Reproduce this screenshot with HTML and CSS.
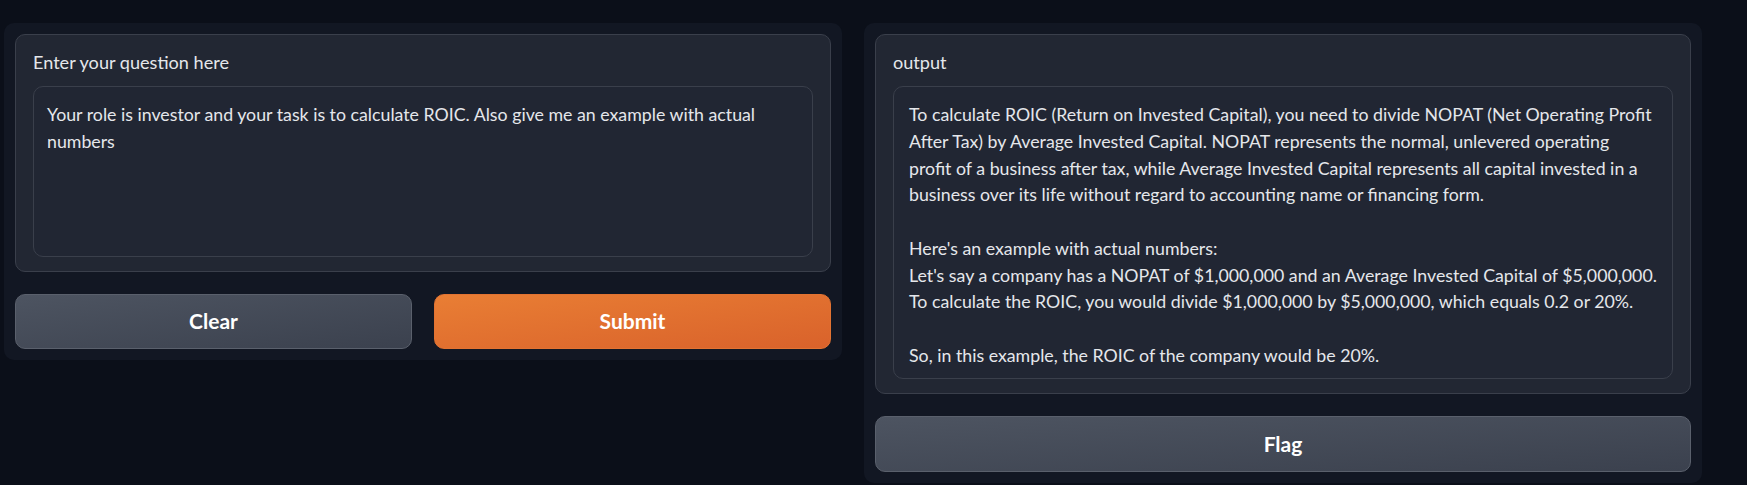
FILE: index.html
```html
<!DOCTYPE html>
<html lang="en">
<head>
<meta charset="utf-8">
<title>ROIC</title>
<link rel="stylesheet" href="styles.css">
</head>
<body>
<main class="app">
  <section class="panel">
    <div class="block">
      <label class="block-label" for="q">Enter your question here</label>
      <textarea id="q" class="field field-input" readonly>Your role is investor and your task is to calculate ROIC. Also give me an example with actual
numbers</textarea>
    </div>
    <div class="btn-row">
      <button class="btn btn-secondary">Clear</button>
      <button class="btn btn-primary">Submit</button>
    </div>
  </section>
  <section class="panel">
    <div class="block">
      <div class="block-label">output</div>
      <div class="field field-output">To calculate ROIC (Return on Invested Capital), you need to divide NOPAT (Net Operating Profit
After Tax) by Average Invested Capital. NOPAT represents the normal, unlevered operating
profit of a business after tax, while Average Invested Capital represents all capital invested in a
business over its life without regard to accounting name or financing form.

Here's an example with actual numbers:
Let's say a company has a NOPAT of $1,000,000 and an Average Invested Capital of $5,000,000.
To calculate the ROIC, you would divide $1,000,000 by $5,000,000, which equals 0.2 or 20%.

So, in this example, the ROIC of the company would be 20%.</div>
    </div>
    <button class="btn btn-secondary btn-wide">Flag</button>
  </section>
</main>
</body>
</html>
```
FILE: styles.css
```css
* { box-sizing: border-box; }
html, body { margin: 0; padding: 0; }
body {
  background: #0b0f19;
  font-family: "Lato", "Liberation Sans", sans-serif;
  color: #e5e7eb;
  width: 1747px;
  height: 485px;
  overflow: hidden;
}
.app {
  display: flex;
  align-items: flex-start;
  gap: 22px;
  padding: 23px 45px 0 4px;
}
.panel {
  flex: 1 1 0;
  background: #121723;
  border-radius: 10px;
  padding: 11px;
  display: flex;
  flex-direction: column;
  gap: 22px;
}
.block {
  background: #222733;
  border: 1px solid #3a3f4b;
  border-radius: 10px;
  padding: 14px 17px 14px 17px;
  display: flex;
  flex-direction: column;
  gap: 11px;
}
.block-label {
  display: block;
  font-size: 18.1px;
  line-height: 26px;
  color: #e5e7eb;
  height: 26px;
}
.field {
  display: block;
  width: 100%;
  background: #212633;
  border: 1px solid #3a3f4b;
  border-radius: 10px;
  color: #e5e7eb;
  font-family: "Lato", "Liberation Sans", sans-serif;
  font-size: 17.75px;
  line-height: 26.75px;
  white-space: pre;
  overflow: hidden;
  margin: 0;
}
.field-input {
  height: 171px;
  padding: 14px 13px;
  resize: none;
  outline: none;
}
.field-output {
  height: 293px;
  padding: 14px 15px 11px 15px;
}
.btn-row {
  display: flex;
  gap: 22px;
}
.btn {
  flex: 1 1 0;
  height: 55px;
  padding: 0 0 2px 0;
  border-radius: 10px;
  font-family: "Lato", "Liberation Sans", sans-serif;
  font-weight: 700;
  font-size: 21px;
  color: #ffffff;
  cursor: pointer;
}
.btn-secondary {
  background: linear-gradient(to bottom right, #4d5461, #3b414e);
  border: 1px solid #5a606c;
}
.btn-primary {
  background: linear-gradient(to bottom right, #e97e34, #d9622b);
  border: 1px solid #e27332;
}
.btn-wide {
  flex: none;
  height: 56px;
}
```
